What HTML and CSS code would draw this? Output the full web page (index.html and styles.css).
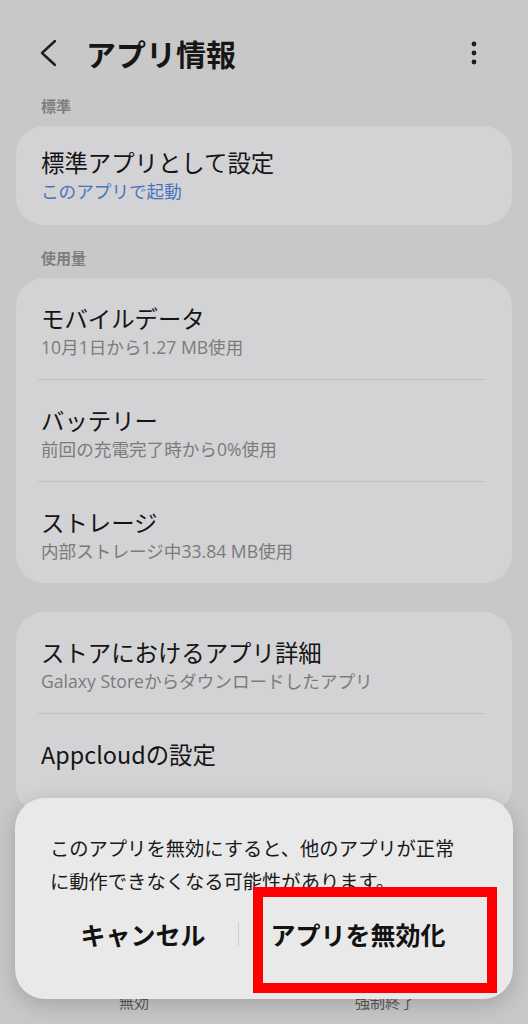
FILE: index.html
```html
<!DOCTYPE html>
<html lang="ja">
<head>
<meta charset="utf-8">
<link rel="stylesheet" href="styles.css">
</head>
<body>
<div class="page">
  <header class="topbar">
    <svg class="back" width="20" height="28" viewBox="0 0 20 28"><polyline points="16,2 3,14 16,26" fill="none" stroke="#1e1e1e" stroke-width="2.4" stroke-linecap="round" stroke-linejoin="round"/></svg>
    <h1 class="title">アプリ情報</h1>
    <svg class="more" width="8" height="26" viewBox="0 0 8 26"><circle cx="4" cy="4" r="2.4" fill="#1e1e1e"/><circle cx="4" cy="13" r="2.4" fill="#1e1e1e"/><circle cx="4" cy="22" r="2.4" fill="#1e1e1e"/></svg>
  </header>

  <div class="section-label first">標準</div>
  <section class="card card-single">
    <div class="item-title">標準アプリとして設定</div>
    <div class="item-sub link">このアプリで起動</div>
  </section>

  <div class="section-label">使用量</div>
  <section class="card">
    <div class="row">
      <div class="item-title">モバイルデータ</div>
      <div class="item-sub">10月1日から1.27 MB使用</div>
    </div>
    <div class="divider"></div>
    <div class="row">
      <div class="item-title">バッテリー</div>
      <div class="item-sub">前回の充電完了時から0%使用</div>
    </div>
    <div class="divider"></div>
    <div class="row">
      <div class="item-title">ストレージ</div>
      <div class="item-sub">内部ストレージ中33.84 MB使用</div>
    </div>
  </section>

  <section class="card card-third">
    <div class="row">
      <div class="item-title">ストアにおけるアプリ詳細</div>
      <div class="item-sub">Galaxy Storeからダウンロードしたアプリ</div>
    </div>
    <div class="divider"></div>
    <div class="row row-tall">
      <div class="item-title">Appcloudの設定</div>
    </div>
  </section>

  <nav class="bottombar">
    <span class="bb-item">無効</span>
    <span class="bb-item">強制終了</span>
  </nav>
</div>

<div class="dialog">
  <p class="dialog-text">このアプリを無効にすると、他のアプリが正常に動作できなくなる可能性があります。</p>
  <div class="dialog-actions">
    <span class="btn btn-cancel">キャンセル</span>
    <span class="btn-sep"></span>
    <span class="btn btn-ok">アプリを無効化</span>
  </div>
</div>
<div class="highlight"></div>
</body>
</html>
```

FILE: styles.css
```css
* { box-sizing: border-box; }
html, body { margin: 0; padding: 0; }
body {
  width: 528px;
  height: 1024px;
  overflow: hidden;
  background: #c8c8c8;
  font-family: "Noto Sans CJK JP", "Noto Sans", sans-serif;
  color: #141414;
  position: relative;
}
.page {
  display: flex;
  flex-direction: column;
  height: 1024px;
  padding: 0 16px;
}
.topbar {
  display: flex;
  align-items: center;
  height: 56px;
  margin-top: 25px;
  padding-left: 23px;
}
.back { flex: none; }
.title {
  margin: 0 0 0 27px;
  font-size: 30px;
  font-weight: 700;
  line-height: 40px;
  color: #161616;
  flex: 1;
}
.more { flex: none; margin-right: 34px; }

.section-label {
  font-size: 15px;
  font-weight: 700;
  line-height: 20px;
  color: #7e7e7e;
  padding: 23px 25px 10px;
}
.section-label.first { padding-top: 15px; }

.card {
  background: #d3d3d5;
  border-radius: 28px;
}
.card-single {
  padding: 21px 25px 22px;
}
.card-third { margin-top: 29px; }
.row {
  padding: 25px 25px 20px;
}
.row-tall { min-height: 100px; }
.item-title {
  font-size: 23.4px;
  line-height: 30px;
  color: #151515;
}
.item-sub {
  font-family: "Open Sans", "Noto Sans CJK JP", sans-serif;
  font-size: 17.6px;
  line-height: 24px;
  margin-top: 2px;
  color: #7b7b7b;
}
.item-sub.link { color: #4a73bf; }
.divider {
  height: 1px;
  background: #c2c2c4;
  margin: 0 27px 0 22px;
}

.bottombar {
  margin-top: auto;
  height: 40px;
  display: flex;
  padding-top: 8px;
}
.bb-item {
  text-align: center;
  font-size: 15px;
  line-height: 20px;
  color: #5a5a5a;
  flex: none;
}
.bb-item:first-child { width: 236px; }
.bb-item:last-child { width: 266px; }

.dialog {
  position: absolute;
  left: 15px;
  top: 798px;
  width: 498px;
  height: 201px;
  background: #e9e9e9;
  border-radius: 30px;
  box-shadow: 0 6px 22px rgba(0, 0, 0, 0.18);
  padding: 34px 50px 0 35px;
}
.dialog-text {
  margin: 0;
  font-size: 19.3px;
  line-height: 33px;
  color: #1a1a1a;
}
.dialog-actions {
  display: flex;
  align-items: center;
  margin-top: 21px;
  margin-left: -14px;
  height: 30px;
}
.btn {
  font-size: 25px;
  font-weight: 700;
  line-height: 30px;
  text-align: center;
  color: #121212;
  white-space: nowrap;
}
.btn-cancel { width: 202px; padding-left: 12px; flex: none; }
.btn-sep {
  width: 1px;
  height: 24px;
  background: #cfcfcf;
  flex: none;
}
.btn-ok { width: 238px; flex: none; }

.highlight {
  position: absolute;
  left: 253px;
  top: 887px;
  width: 244px;
  height: 106px;
  border: 10px solid #ff0000;
}
```
